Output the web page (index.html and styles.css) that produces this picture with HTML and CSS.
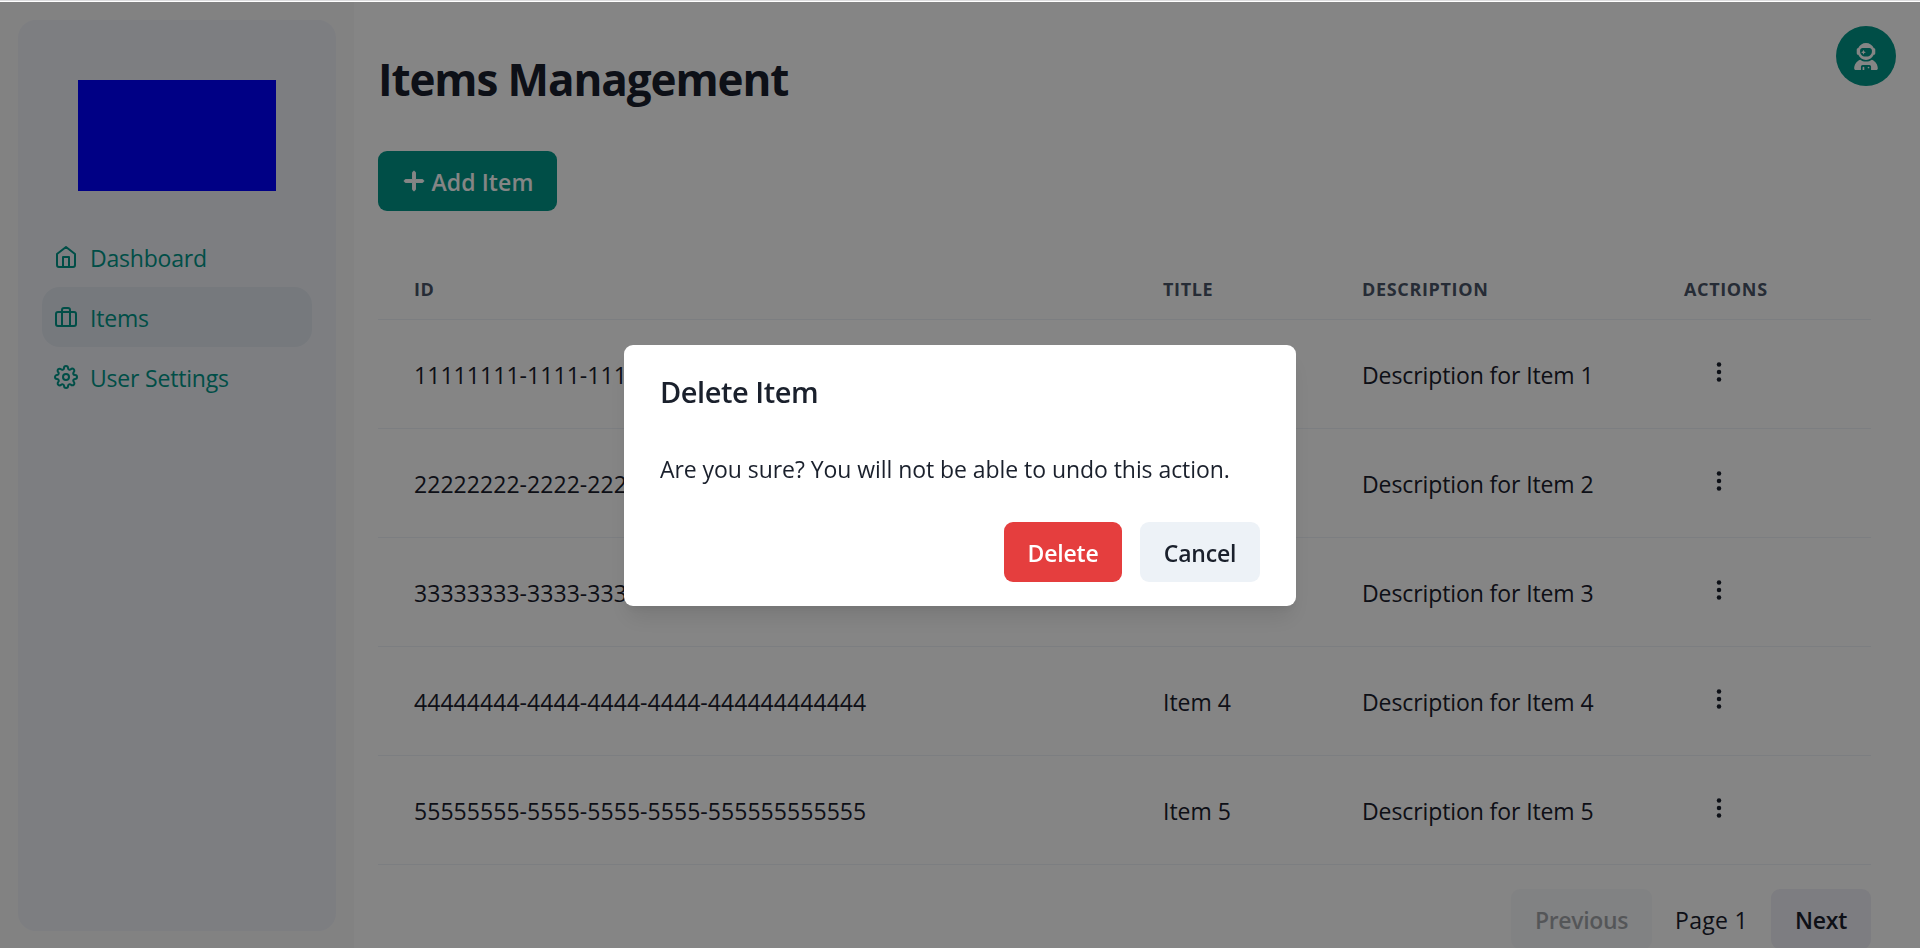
FILE: index.html
```
<!DOCTYPE html>
<html lang="en">
<head>
<meta charset="utf-8">
<title>Items Management</title>
<link rel="stylesheet" href="styles.css">
</head>
<body>
<div class="topline"></div>
<div class="app">
  <aside class="sidebar">
    <div class="sidebar-card">
      <div class="logo"></div>
      <nav class="nav">
        <a class="nav-item">
          <svg class="nav-icon" viewBox="0 0 24 24"><path d="M3 9l9-7 9 7v11a2 2 0 0 1-2 2H5a2 2 0 0 1-2-2z"/><polyline points="9 22 9 12 15 12 15 22"/></svg>
          <span>Dashboard</span>
        </a>
        <a class="nav-item active">
          <svg class="nav-icon" viewBox="0 0 24 24"><rect x="2" y="7" width="20" height="14" rx="2" ry="2"/><path d="M16 21V5a2 2 0 0 0-2-2h-4a2 2 0 0 0-2 2v16"/></svg>
          <span>Items</span>
        </a>
        <a class="nav-item">
          <svg class="nav-icon" viewBox="0 0 24 24"><circle cx="12" cy="12" r="3"/><path d="M19.4 15a1.65 1.65 0 0 0 .33 1.82l.06.06a2 2 0 0 1 0 2.83 2 2 0 0 1-2.83 0l-.06-.06a1.65 1.65 0 0 0-1.82-.33 1.65 1.65 0 0 0-1 1.51V21a2 2 0 0 1-2 2 2 2 0 0 1-2-2v-.09A1.65 1.65 0 0 0 9 19.4a1.65 1.65 0 0 0-1.82.33l-.06.06a2 2 0 0 1-2.83 0 2 2 0 0 1 0-2.83l.06-.06a1.65 1.65 0 0 0 .33-1.82 1.65 1.65 0 0 0-1.51-1H3a2 2 0 0 1-2-2 2 2 0 0 1 2-2h.09A1.65 1.65 0 0 0 4.6 9a1.65 1.65 0 0 0-.33-1.82l-.06-.06a2 2 0 0 1 0-2.83 2 2 0 0 1 2.83 0l.06.06a1.65 1.65 0 0 0 1.82.33H9a1.65 1.65 0 0 0 1-1.51V3a2 2 0 0 1 2-2 2 2 0 0 1 2 2v.09a1.65 1.65 0 0 0 1 1.51 1.65 1.65 0 0 0 1.82-.33l.06-.06a2 2 0 0 1 2.83 0 2 2 0 0 1 0 2.83l-.06.06a1.65 1.65 0 0 0-.33 1.82V9a1.65 1.65 0 0 0 1.51 1H21a2 2 0 0 1 2 2 2 2 0 0 1-2 2h-.09a1.65 1.65 0 0 0-1.51 1z"/></svg>
          <span>User Settings</span>
        </a>
      </nav>
    </div>
  </aside>
  <main class="main">
    <h1 class="heading">Items Management</h1>
    <button class="btn btn-primary">
      <svg class="plus" viewBox="0 0 448 512"><path d="M256 80c0-17.7-14.3-32-32-32s-32 14.3-32 32V224H48c-17.7 0-32 14.3-32 32s14.3 32 32 32H192V432c0 17.7 14.3 32 32 32s32-14.3 32-32V288H400c17.7 0 32-14.3 32-32s-14.3-32-32-32H256V80z"/></svg>
      <span>Add Item</span>
    </button>
    <div class="table">
      <div class="row head"><div>ID</div><div>Title</div><div>Description</div><div>Actions</div></div>
      <div class="row"><div class="id">11111111-1111-1111-1111-111111111111</div><div>Item 1</div><div class="desc">Description for Item 1</div><div><svg class="dots" viewBox="0 0 16 16"><circle cx="8" cy="3" r="1.5"/><circle cx="8" cy="8" r="1.5"/><circle cx="8" cy="13" r="1.5"/></svg></div></div>
      <div class="row"><div class="id">22222222-2222-2222-2222-222222222222</div><div>Item 2</div><div class="desc">Description for Item 2</div><div><svg class="dots" viewBox="0 0 16 16"><circle cx="8" cy="3" r="1.5"/><circle cx="8" cy="8" r="1.5"/><circle cx="8" cy="13" r="1.5"/></svg></div></div>
      <div class="row"><div class="id">33333333-3333-3333-3333-333333333333</div><div>Item 3</div><div class="desc">Description for Item 3</div><div><svg class="dots" viewBox="0 0 16 16"><circle cx="8" cy="3" r="1.5"/><circle cx="8" cy="8" r="1.5"/><circle cx="8" cy="13" r="1.5"/></svg></div></div>
      <div class="row"><div class="id">44444444-4444-4444-4444-444444444444</div><div>Item 4</div><div class="desc">Description for Item 4</div><div><svg class="dots" viewBox="0 0 16 16"><circle cx="8" cy="3" r="1.5"/><circle cx="8" cy="8" r="1.5"/><circle cx="8" cy="13" r="1.5"/></svg></div></div>
      <div class="row"><div class="id">55555555-5555-5555-5555-555555555555</div><div>Item 5</div><div class="desc">Description for Item 5</div><div><svg class="dots" viewBox="0 0 16 16"><circle cx="8" cy="3" r="1.5"/><circle cx="8" cy="8" r="1.5"/><circle cx="8" cy="13" r="1.5"/></svg></div></div>
    </div>
    <div class="pager">
      <button class="btn btn-prev">Previous</button>
      <span class="page">Page 1</span>
      <button class="btn btn-next">Next</button>
    </div>
  </main>
  <button class="avatar">
    <svg class="astronaut" viewBox="0 0 448 512"><path d="M370.7 96.1C346.1 39.5 289.7 0 224 0S101.9 39.5 77.3 96.1C60.9 97.5 48 111.2 48 128v64c0 16.8 12.9 30.5 29.3 31.9C101.9 280.5 158.3 320 224 320s122.1-39.5 146.7-96.1c16.4-1.4 29.3-15.1 29.3-31.9V128c0-16.8-12.9-30.5-29.3-31.9zM336 144v16c0 53-43 96-96 96H208c-53 0-96-43-96-96V144c0-26.5 21.5-48 48-48H288c26.5 0 48 21.5 48 48zM189.3 162.7l-6-21.2c-.9-3.3-3.9-5.5-7.3-5.5s-6.4 2.2-7.3 5.5l-6 21.2-21.2 6c-3.3 .9-5.5 3.9-5.5 7.3s2.2 6.4 5.5 7.3l21.2 6 6 21.2c.9 3.3 3.9 5.5 7.3 5.5s6.4-2.2 7.3-5.5l6-21.2 21.2-6c3.3-.9 5.5-3.9 5.5-7.3s-2.2-6.4-5.5-7.3l-21.2-6zM112.7 316.5C46.7 342.6 0 407 0 482.3C0 498.7 13.3 512 29.7 512H128V448c0-17.7 14.3-32 32-32H288c17.7 0 32 14.3 32 32v64l98.3 0c16.4 0 29.7-13.3 29.7-29.7c0-75.3-46.7-139.7-112.7-165.8C303.9 338.8 265.5 352 224 352s-79.9-13.2-111.3-35.5zM176 448c-8.8 0-16 7.2-16 16v48h32V464c0-8.8-7.2-16-16-16zm96 32a16 16 0 1 0 0-32 16 16 0 1 0 0 32z"/></svg>
  </button>
</div>
<div class="overlay">
  <section class="modal">
    <h2 class="modal-title">Delete Item</h2>
    <p class="modal-text">Are you sure? You will not be able to undo this action.</p>
    <div class="modal-actions">
      <button class="btn btn-danger">Delete</button>
      <button class="btn btn-cancel">Cancel</button>
    </div>
  </section>
</div>
</body>
</html>
```
FILE: styles.css
```
* { box-sizing: border-box; }
html, body { height: 100%; }
body {
  margin: 0;
  overflow: hidden;
  background: #fff;
  color: #1a202c;
  font: 400 23px/36px "Open Sans", "Noto Sans", sans-serif;
}
h1, h2, p { margin: 0; }
.topline { height: 2px; background: linear-gradient(#dcdcde 50%, #fff 50%); }

.app { display: flex; height: 946px; background: #fff; }
.sidebar { width: 354px; padding: 18px; background: #fafafa; }
.sidebar-card { height: 911px; padding: 60px 24px 0; border-radius: 18px; background: #eff1f8; }
.logo { width: 198px; height: 111px; margin: 0 auto 36px; background: #0000ff; }
.nav-item {
  display: flex;
  align-items: center;
  gap: 12px;
  height: 60px;
  padding: 0 12px;
  border-radius: 18px;
  color: #009688;
  letter-spacing: -0.2px;
}
.nav-item span { padding-top: 2px; }
.nav-item.active { background: #e2e8ef; }
.nav-icon { width: 24px; height: 24px; fill: none; stroke: currentColor; stroke-width: 2; stroke-linecap: round; stroke-linejoin: round; }

.main { flex: 1; padding: 47px 49px 0 24px; }
.heading { font-size: 44px; font-weight: 700; line-height: 60px; letter-spacing: -1.1px; margin-bottom: 42px; }
.btn {
  display: inline-flex;
  align-items: center;
  justify-content: center;
  height: 60px;
  padding: 2px 0 0;
  border: 0;
  border-radius: 9px;
  color: #1a202c;
  background: #edf2f7;
  font: 600 23px/36px "Open Sans", "Noto Sans", sans-serif;
  letter-spacing: -0.2px;
}
.btn-primary { display: flex; width: 179px; gap: 6px; color: #fff; background: #009688; letter-spacing: 0.1px; }
.plus { width: 24px; height: 24px; margin-top: -2px; fill: currentColor; stroke: currentColor; stroke-width: 20; }

.table { margin-top: 48px; }
.row {
  display: grid;
  grid-template-columns: 749px 199px 322px 1fr;
  align-items: center;
  height: 109px;
  padding-top: 2px;
  border-bottom: 1px solid #edf2f7;
}
.row > div { padding-left: 36px; }
.row .id { letter-spacing: 0.05px; }
.row .desc { letter-spacing: -0.1px; }
.row.head {
  height: 61px;
  padding-top: 0;
  color: #4a5568;
  font-size: 18px;
  font-weight: 700;
  line-height: 24px;
  letter-spacing: 0.65px;
  text-transform: uppercase;
}
.dots { display: block; width: 24px; height: 24px; margin: -7px 0 0 23px; fill: currentColor; }

.pager { display: flex; justify-content: flex-end; align-items: center; margin-top: 24px; }
.btn-prev { width: 141px; opacity: 0.4; letter-spacing: -0.35px; }
.page { width: 119px; padding-top: 2px; text-align: center; letter-spacing: 0.3px; }
.btn-next { width: 100px; background: #f0f0f7; }

.avatar {
  position: fixed;
  top: 26px;
  right: 24px;
  display: flex;
  align-items: center;
  justify-content: center;
  width: 60px;
  height: 60px;
  border: 0;
  border-radius: 50%;
  color: #fff;
  background: #009688;
}
.astronaut { width: 24px; height: 27px; fill: currentColor; }

.overlay {
  position: fixed;
  inset: 2px 0 0;
  display: flex;
  justify-content: center;
  align-items: flex-start;
  padding-top: 343px;
  background: rgba(0, 0, 0, 0.48);
}
.modal {
  width: 672px;
  height: 261px;
  padding: 23px 36px;
  border-radius: 9px;
  background: #fff;
  box-shadow: 0 15px 22px -4px rgba(0, 0, 0, 0.1), 0 6px 9px -3px rgba(0, 0, 0, 0.05);
}
.modal-title { font-size: 29px; font-weight: 600; line-height: 48px; letter-spacing: -0.45px; }
.modal-text { margin-top: 35px; letter-spacing: -0.06px; }
.modal-actions { display: flex; justify-content: flex-end; gap: 18px; margin-top: 35px; }
.btn-danger { width: 118px; color: #fff; background: #e53e3e; }
.btn-cancel { width: 120px; }
```
